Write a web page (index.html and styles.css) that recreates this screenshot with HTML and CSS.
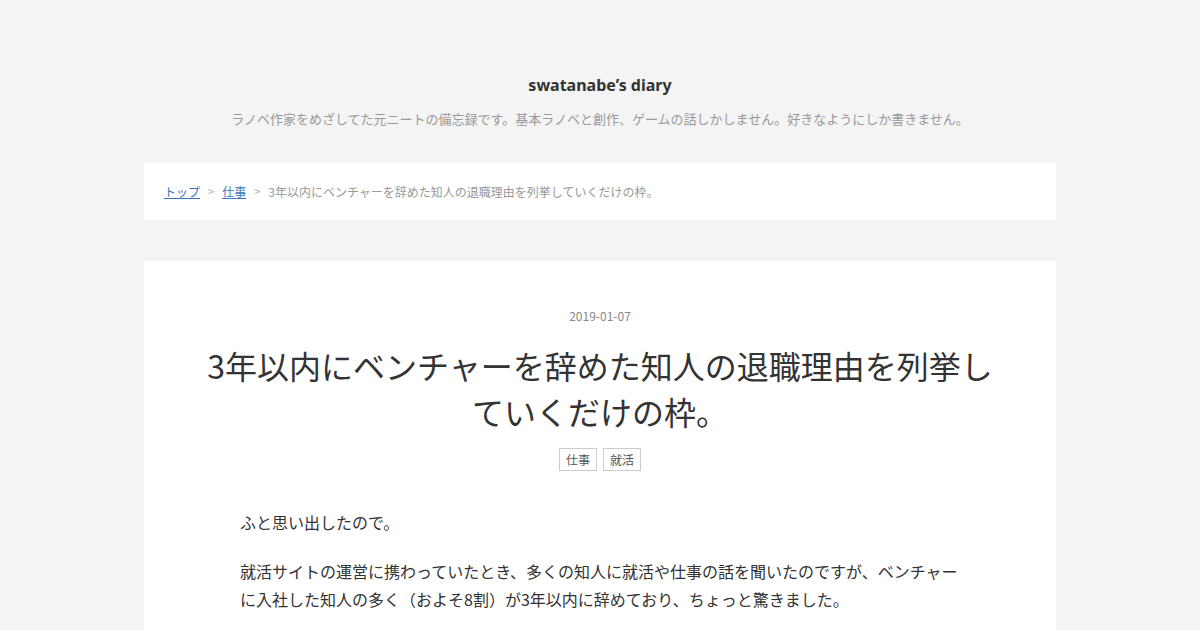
FILE: index.html
```html
<!DOCTYPE html>
<html lang="ja">
<head>
<meta charset="utf-8">
<title>swatanabe's diary</title>
<link rel="stylesheet" href="styles.css">
</head>
<body>
<header class="blog-header">
  <h1 class="blog-title">swatanabe’s diary</h1>
  <p class="blog-desc">ラノベ作家をめざしてた元ニートの備忘録です。基本ラノベと創作、ゲームの話しかしません。好きなようにしか書きません。</p>
</header>
<main class="container">
  <nav class="breadcrumb">
    <a href="#" class="crumb-link">トップ</a>
    <span class="sep">&gt;</span>
    <a href="#" class="crumb-link">仕事</a>
    <span class="sep">&gt;</span>
    <span class="crumb-current">3年以内にベンチャーを辞めた知人の退職理由を列挙していくだけの枠。</span>
  </nav>
  <article class="entry">
    <div class="entry-date">2019-01-07</div>
    <h2 class="entry-title">3年以内にベンチャーを辞めた知人の退職理由を列挙していくだけの枠。</h2>
    <div class="entry-tags">
      <span class="tag">仕事</span>
      <span class="tag">就活</span>
    </div>
    <div class="entry-body">
      <p>ふと思い出したので。</p>
      <p>就活サイトの運営に携わっていたとき、多くの知人に就活や仕事の話を聞いたのですが、ベンチャーに入社した知人の多く（およそ8割）が3年以内に辞めており、ちょっと驚きました。</p>
    </div>
  </article>
</main>
</body>
</html>
```
FILE: styles.css
```css
html, body {
  margin: 0;
  padding: 0;
}
body {
  background: #f4f4f4;
  color: #333;
  font-family: "Noto Sans", "Noto Sans CJK JP", sans-serif;
  height: 630px;
  overflow: hidden;
}
.blog-header {
  padding-top: 73px;
  text-align: center;
}
.blog-title {
  margin: 0;
  font-size: 16px;
  line-height: 24px;
  font-weight: bold;
  color: #333;
}
.blog-desc {
  margin: 12px 0 0;
  font-size: 13px;
  line-height: 20px;
  color: #999;
  font-family: "Noto Sans CJK JP", sans-serif;
}
.container {
  width: 912px;
  margin: 34px auto 0;
}
.breadcrumb {
  background: #fff;
  padding: 20px;
  font-size: 12px;
  line-height: 17px;
  color: #999;
  font-family: "Noto Sans CJK JP", sans-serif;
  display: flex;
  align-items: center;
}
.crumb-link {
  color: #3d73bd;
  text-decoration: underline;
}
.sep {
  margin: 0 8px;
  color: #aaa;
  font-size: 11px;
}
.entry {
  margin-top: 41px;
  background: #fff;
  padding: 46px 50px 40px;
  font-family: "Noto Sans CJK JP", sans-serif;
}
.entry-date {
  text-align: center;
  font-size: 12px;
  line-height: 18px;
  color: #888;
}
.entry-title {
  margin: 17px 0 0;
  text-align: center;
  font-size: 32px;
  line-height: 46px;
  font-weight: normal;
  color: #333;
}
.entry-tags {
  margin-top: 14px;
  display: flex;
  justify-content: center;
  gap: 6px;
}
.tag {
  display: block;
  border: 1px solid #ccc;
  padding: 0 6px;
  font-size: 12px;
  line-height: 21px;
  color: #555;
}
.entry-body {
  margin-top: 37px;
  padding: 0 46px;
  font-size: 16px;
  line-height: 28px;
  color: #333;
}
.entry-body p {
  margin: 0 0 21px;
}
```
